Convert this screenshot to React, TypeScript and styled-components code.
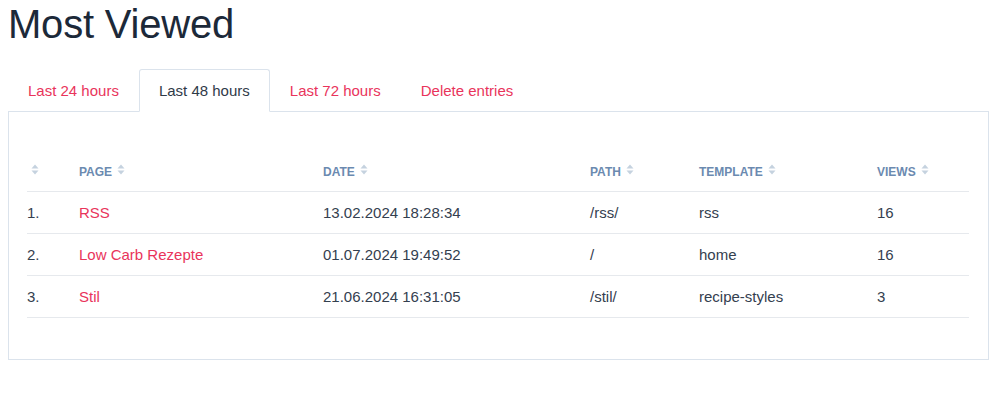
import React from "react";
import styled, { createGlobalStyle } from "styled-components";

const Global = createGlobalStyle`
  body {
    margin: 8px;
    background: #ffffff;
    font-family: "Liberation Sans", Arial, sans-serif;
    color: #34404f;
  }
`;

const Title = styled.h1`
  margin: 0;
  font-size: 40px;
  font-weight: 400;
  line-height: 33px;
  color: #1c2939;
  letter-spacing: -0.2px;
`;

const Tabs = styled.ul`
  list-style: none;
  margin: 28px 0 0 0;
  padding: 0;
  display: flex;
  position: relative;
  z-index: 1;
`;

const Tab = styled.li<{ $active?: boolean }>`
  height: 43px;
  box-sizing: border-box;
  padding: 0 19px 1px;
  display: flex;
  align-items: center;
  font-size: 15px;
  color: ${(p) => (p.$active ? "#2f3a48" : "#e9345b")};
  background: ${(p) => (p.$active ? "#fff" : "transparent")};
  border: 1px solid ${(p) => (p.$active ? "#dbe3ec" : "transparent")};
  border-bottom: 1px solid ${(p) => (p.$active ? "#ffffff" : "transparent")};
  border-radius: 3px 3px 0 0;
  margin-bottom: -1px;
  cursor: pointer;
`;

const Panel = styled.div`
  border: 1px solid #dbe3ec;
  width: 981px;
  box-sizing: border-box;
  padding: 49px 19px 41px 18px;
`;

const Table = styled.table`
  width: 100%;
  border-collapse: collapse;
  table-layout: fixed;
`;

const Th = styled.th`
  text-align: left;
  font-size: 12px;
  font-weight: 700;
  text-transform: uppercase;
  color: #6b8ab0;
  padding: 0 0 9px 0;
  height: 21px;
  border-bottom: 1px solid #e6e9ed;
`;

const Td = styled.td`
  font-size: 15px;
  color: #34404f;
  height: 41px;
  padding: 0;
  border-bottom: 1px solid #e6e9ed;
`;

const Link = styled.a`
  color: #e9345b;
  text-decoration: none;
`;

const SortWrap = styled.span<{ $first?: boolean }>`
  display: inline-block;
  vertical-align: middle;
  margin-left: ${(p) => (p.$first ? "4px" : "5px")};
  margin-top: -3px;
`;

const Sort = ({ first }: { first?: boolean }) => (
  <SortWrap $first={first}>
    <svg width="8" height="11" viewBox="0 0 8 11">
      <path d="M4 0.5 L7.5 4.5 L0.5 4.5 Z" fill="#c5d2df" />
      <path d="M4 10.5 L7.5 6.5 L0.5 6.5 Z" fill="#c5d2df" />
    </svg>
  </SortWrap>
);

const rows = [
  ["1.", "RSS", "13.02.2024 18:28:34", "/rss/", "rss", "16"],
  ["2.", "Low Carb Rezepte", "01.07.2024 19:49:52", "/", "home", "16"],
  ["3.", "Stil", "21.06.2024 16:31:05", "/stil/", "recipe-styles", "3"],
];

export default function App() {
  return (
    <>
      <Global />
      <Title>Most Viewed</Title>
      <Tabs>
        <Tab>Last 24 hours</Tab>
        <Tab $active>Last 48 hours</Tab>
        <Tab>Last 72 hours</Tab>
        <Tab>Delete entries</Tab>
      </Tabs>
      <Panel>
        <Table>
          <colgroup>
            <col style={{ width: 52 }} />
            <col style={{ width: 244 }} />
            <col style={{ width: 267 }} />
            <col style={{ width: 109 }} />
            <col style={{ width: 178 }} />
            <col />
          </colgroup>
          <thead>
            <tr>
              <Th><Sort first /></Th>
              <Th>Page<Sort /></Th>
              <Th>Date<Sort /></Th>
              <Th>Path<Sort /></Th>
              <Th>Template<Sort /></Th>
              <Th>Views<Sort /></Th>
            </tr>
          </thead>
          <tbody>
            {rows.map((r) => (
              <tr key={r[0]}>
                <Td>{r[0]}</Td>
                <Td><Link href="#">{r[1]}</Link></Td>
                <Td>{r[2]}</Td>
                <Td>{r[3]}</Td>
                <Td>{r[4]}</Td>
                <Td>{r[5]}</Td>
              </tr>
            ))}
          </tbody>
        </Table>
      </Panel>
    </>
  );
}
